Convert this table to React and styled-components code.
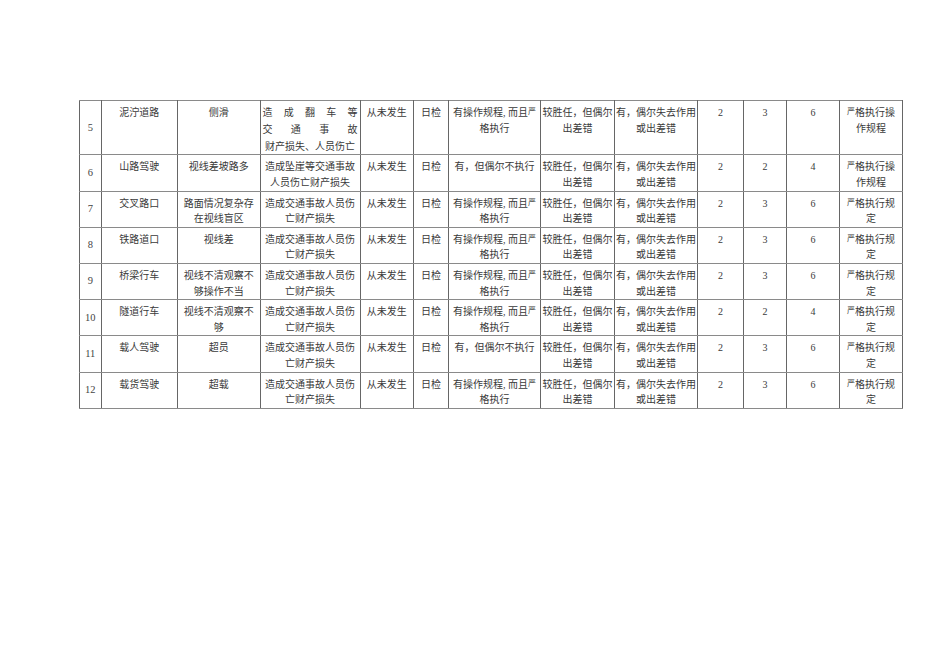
import React from "react";
import styled, { createGlobalStyle } from "styled-components";

const Global = createGlobalStyle`
  html, body { margin: 0; padding: 0; background: #fff; }
  body { width: 950px; height: 672px; overflow: hidden; }
`;

const Page = styled.div`
  padding: 100px 0 0 79px;
  font-family: "Liberation Serif", "Noto Sans CJK SC", serif;
  color: #3a3a3a;
`;

const Table = styled.table`
  border-collapse: collapse;
  table-layout: fixed;
  width: 823px;
  border-left: 1.5px solid #333;
  border-right: 1.5px solid #333;
  border-top: 1px solid #888;
  border-bottom: 1px solid #888;
`;

const Row = styled.tr`
  height: ${(p) => (p.$tall ? 53.5 : 35.3)}px;
`;

const Cell = styled.td`
  border-top: 1px solid #8a8a8a;
  border-bottom: 1px solid #8a8a8a;
  border-left: 1px solid #666;
  border-right: 1px solid #666;
  padding: 4px 0 0 0;
  vertical-align: ${(p) => (p.$middle ? "middle" : "top")};
  text-align: center;
  font-size: 10px;
  line-height: 16.3px;
  font-weight: 400;
  overflow: visible;
`;

const NumCell = styled(Cell)`
  padding: 0;
  font-size: 10.5px;
  color: #444;
`;

const Line = styled.div`
  white-space: nowrap;
  height: 15.6px;
`;

const JustLine = styled.div`
  white-space: nowrap;
  height: ${(p) => (p.$h ? p.$h : 16.5)}px;
  text-align: justify;
  text-align-last: justify;
  padding: 0 2px 0 2px;
`;

const Small = styled.span`
  font-size: 8px;
  line-height: 0;
  vertical-align: 2px;
`;

const widths = [21.5, 76.5, 82.5, 100, 53.5, 35, 92, 74, 83, 46, 43, 53, 63];

const rules = ["有操作规程, 而且", <Small key="y">严</Small>];

const A = { f: [rules, "格执行"] };
const B = { f: ["有，但偶尔不执行"] };

const accident = ["造成交通事故人员伤", "亡财产损失"];
const opFix = [[<Small key="s">严</Small>, "格执行操"], "作规程"];
const ruleFix = [[<Small key="s">严</Small>, "格执行规"], "定"];

const rows = [
  { n: "5", a: "泥泞道路", b: ["侧滑"], c: null, ...A, x: "2", y: "3", z: "6", l: opFix, tall: true },
  { n: "6", a: "山路驾驶", b: ["视线差坡路多"], c: ["造成坠崖等交通事故", "人员伤亡财产损失"], ...B, x: "2", y: "2", z: "4", l: opFix },
  { n: "7", a: "交叉路口", b: ["路面情况复杂存", "在视线盲区"], c: accident, ...A, x: "2", y: "3", z: "6", l: ruleFix },
  { n: "8", a: "铁路道口", b: ["视线差"], c: accident, ...A, x: "2", y: "3", z: "6", l: ruleFix },
  { n: "9", a: "桥梁行车", b: ["视线不清观察不", "够操作不当"], c: accident, ...A, x: "2", y: "3", z: "6", l: ruleFix },
  { n: "10", a: "隧道行车", b: ["视线不清观察不", "够"], c: accident, ...A, x: "2", y: "2", z: "4", l: ruleFix },
  { n: "11", a: "载人驾驶", b: ["超员"], c: accident, ...B, x: "2", y: "3", z: "6", l: ruleFix },
  { n: "12", a: "载货驾驶", b: ["超载"], c: accident, ...A, x: "2", y: "3", z: "6", l: ruleFix },
];

const Lines = ({ items }) =>
  items.map((t, i) => <Line key={i}>{t}</Line>);

export default function App() {
  return (
    <>
      <Global />
      <Page>
        <Table>
          <colgroup>
            {widths.map((w, i) => (
              <col key={i} style={{ width: w }} />
            ))}
          </colgroup>
          <tbody>
            {rows.map((r) => (
              <Row key={r.n} $tall={r.tall}>
                <NumCell $middle>{r.n}</NumCell>
                <Cell>{r.a}</Cell>
                <Cell>
                  <Lines items={r.b} />
                </Cell>
                <Cell>
                  {r.c ? (
                    <Lines items={r.c} />
                  ) : (
                    <>
                      <JustLine>造成翻车等</JustLine>
                      <JustLine $h={17.4}>交通事故</JustLine>
                      <Line>财产损失、人员伤亡</Line>
                    </>
                  )}
                </Cell>
                <Cell>从未发生</Cell>
                <Cell>日检</Cell>
                <Cell>
                  <Lines items={r.f} />
                </Cell>
                <Cell>
                  <Lines items={["较胜任，但偶尔", "出差错"]} />
                </Cell>
                <Cell>
                  <Lines items={["有，偶尔失去作用", "或出差错"]} />
                </Cell>
                <Cell>{r.x}</Cell>
                <Cell>{r.y}</Cell>
                <Cell>{r.z}</Cell>
                <Cell>
                  <Lines items={r.l} />
                </Cell>
              </Row>
            ))}
          </tbody>
        </Table>
      </Page>
    </>
  );
}
